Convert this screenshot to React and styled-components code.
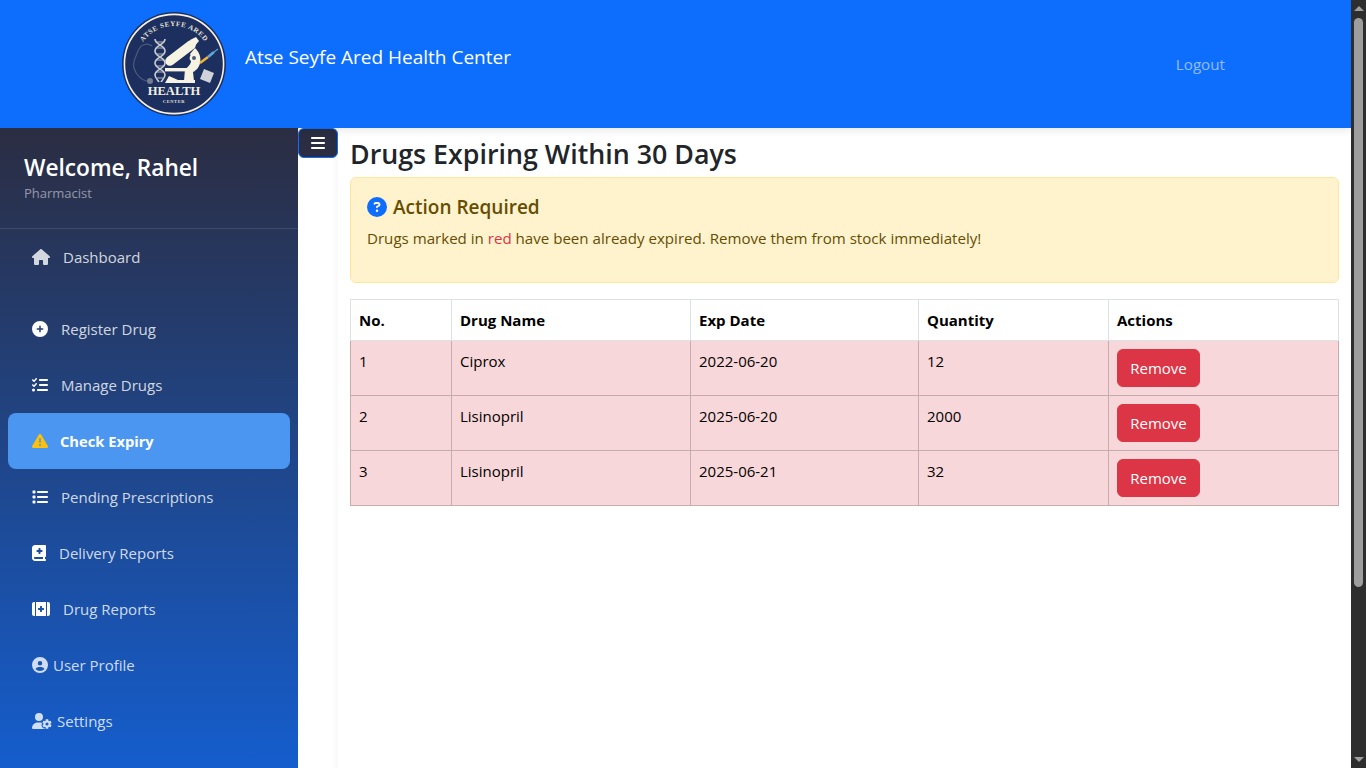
import styled, { createGlobalStyle } from "styled-components";
import {
  FaHouse,
  FaCirclePlus,
  FaListCheck,
  FaTriangleExclamation,
  FaList,
  FaBookMedical,
  FaKitMedical,
  FaCircleUser,
  FaUserGear,
  FaCircleQuestion,
  FaBars,
} from "react-icons/fa6";

const navItems = [
  { label: "Dashboard", icon: FaHouse, iconWidth: 18, first: true, soft: true },
  { label: "Register Drug", icon: FaCirclePlus, iconWidth: 16 },
  { label: "Manage Drugs", icon: FaListCheck, iconWidth: 16 },
  { label: "Check Expiry", icon: FaTriangleExclamation, iconWidth: 16, active: true },
  { label: "Pending Prescriptions", icon: FaList, iconWidth: 16 },
  { label: "Delivery Reports", icon: FaBookMedical, iconWidth: 14 },
  { label: "Drug Reports", icon: FaKitMedical, iconWidth: 18 },
  { label: "User Profile", icon: FaCircleUser, iconWidth: 16, tight: true, soft: true },
  { label: "Settings", icon: FaUserGear, iconWidth: 20, tight: true, soft: true },
];

const drugs = [
  { no: 1, name: "Ciprox", date: "2022-06-20", qty: 12 },
  { no: 2, name: "Lisinopril", date: "2025-06-20", qty: 2000 },
  { no: 3, name: "Lisinopril", date: "2025-06-21", qty: 32 },
];

function Logo() {
  return (
    <LogoSvg viewBox="0 0 106 104" role="img" aria-label="Atse Seyfe Ared Health Center">
      <defs>
        <path id="logoArc" d="M 14 52 A 38 38 0 0 1 90 52" />
      </defs>
      <circle cx="52" cy="52" r="52" fill="#1c2f5e" />
      <circle cx="52" cy="52" r="49.6" fill="none" stroke="#f6f1e2" strokeWidth="1.6" />
      <text fontFamily="Liberation Serif, serif" fontWeight="700" fontSize="7" letterSpacing="0.6" fill="#e4e1d4">
        <textPath href="#logoArc" startOffset="50%" textAnchor="middle">
          ATSE SEYFE ARED
        </textPath>
      </text>
      {/* stethoscope */}
      <path
        d="M30 34 C25 30 18 33 16 39 C14 45 10 50 12 56 C14 63 20 69 26 69"
        fill="none"
        stroke="#4c5b7c"
        strokeWidth="1.2"
      />
      <circle cx="28" cy="69" r="3" fill="#717c92" />
      {/* dna */}
      <path
        d="M33 27 C33 33 43 33 43 39 C43 45 33 45 33 51 C33 57 43 57 43 63 C43 66 40 68 39 70 M43 27 C43 33 33 33 33 39 C33 45 43 45 43 51 C43 57 33 57 33 63 C33 66 36 68 37 70"
        fill="none"
        stroke="#c9ccd0"
        strokeWidth="1.6"
      />
      <path d="M35 30H41M35 36H41M35 42H41M35 48H41M35 54H41M35 60H41M35 66H41" stroke="#aeb3ba" strokeWidth="1" />
      {/* microscope */}
      <path d="M48 49 L69 33" stroke="#f7f3e3" strokeWidth="9.5" strokeLinecap="round" />
      <path d="M68 28 L74 25 L77 29 L72 35Z" fill="#f7f3e3" />
      <path d="M73 36 C81 43 80 56 71 60 L72 69 L62 69 L63 57 C69 54 71 47 68 42Z" fill="#f7f3e3" />
      <rect x="43" y="56" width="23" height="3.4" fill="#f7f3e3" />
      <path d="M43 71 L47 64 L56 68 L73 68 L73 71Z" fill="#f7f3e3" />
      <circle cx="72" cy="46" r="4.4" fill="#f7f3e3" />
      <circle cx="72" cy="46" r="2" fill="#4c5b7c" />
      {/* syringe */}
      <path d="M78 51 L86 45" stroke="#f2b632" strokeWidth="2.4" />
      <path d="M86 45 L92 40" stroke="#5fa5d6" strokeWidth="2.8" />
      <path d="M92 40 L96 37" stroke="#5fa5d6" strokeWidth="1.1" />
      {/* pill pack */}
      <path d="M82 57 L92 61 L88 71 L78 67Z" fill="#cfd3d8" />
      <text
        x="52"
        y="83"
        textAnchor="middle"
        fontFamily="Liberation Serif, serif"
        fontWeight="700"
        fontSize="12.6"
        fill="#f3efe0"
      >
        HEALTH
      </text>
      <text
        x="52"
        y="91"
        textAnchor="middle"
        fontFamily="Liberation Serif, serif"
        fontWeight="700"
        fontSize="4.5"
        letterSpacing="0.6"
        fill="#e6e3d6"
      >
        CENTER
      </text>
    </LogoSvg>
  );
}

export default function App() {
  return (
    <>
      <GlobalStyle />
      <Viewport>
        <Page>
          <Header>
            <Logo />
            <Brand>Atse Seyfe Ared Health Center</Brand>
            <LogoutLink href="#">Logout</LogoutLink>
          </Header>
          <Shell>
            <Sidebar>
              <Profile>
                <Welcome>Welcome, Rahel</Welcome>
                <Role>Pharmacist</Role>
              </Profile>
              <NavList>
                {navItems.map((item) => (
                  <NavItem
                    key={item.label}
                    href="#"
                    $active={item.active}
                    $first={item.first}
                    $tight={item.tight}
                    $soft={item.soft}
                    $iconWidth={item.iconWidth}
                  >
                    <item.icon />
                    {item.label}
                  </NavItem>
                ))}
              </NavList>
            </Sidebar>
            <ToggleColumn>
              <ToggleButton aria-label="Toggle sidebar">
                <FaBars />
              </ToggleButton>
            </ToggleColumn>
            <Content>
              <PageTitle>Drugs Expiring Within 30 Days</PageTitle>
              <Alert>
                <AlertTitle>
                  <FaCircleQuestion />
                  Action Required
                </AlertTitle>
                <AlertText>
                  Drugs marked in <RedWord>red</RedWord> have been already expired. Remove them from stock immediately!
                </AlertText>
              </Alert>
              <DrugTable>
                <colgroup>
                  <col width="101" />
                  <col width="239" />
                  <col width="228" />
                  <col width="190" />
                  <col width="230" />
                </colgroup>
                <thead>
                  <tr>
                    <th>No.</th>
                    <th>Drug Name</th>
                    <th>Exp Date</th>
                    <th>Quantity</th>
                    <th>Actions</th>
                  </tr>
                </thead>
                <tbody>
                  {drugs.map((drug) => (
                    <tr key={drug.no}>
                      <td>{drug.no}</td>
                      <td>{drug.name}</td>
                      <td>{drug.date}</td>
                      <td>{drug.qty}</td>
                      <td>
                        <RemoveButton>Remove</RemoveButton>
                      </td>
                    </tr>
                  ))}
                </tbody>
              </DrugTable>
            </Content>
          </Shell>
        </Page>
        <ScrollTrack aria-hidden="true">
          <ScrollArrow />
          <ScrollThumb />
          <ScrollArrow $down />
        </ScrollTrack>
      </Viewport>
    </>
  );
}

const GlobalStyle = createGlobalStyle`
  * {
    box-sizing: border-box;
  }
  body {
    margin: 0;
    background: #fff;
    color: #212529;
    font-family: "Open Sans", "Noto Sans", sans-serif;
    font-size: 15px;
    line-height: 24px;
  }
`;

const Viewport = styled.div`
  height: 100vh;
  display: flex;
  overflow: hidden;
`;

const Page = styled.div`
  flex: 1;
  min-width: 0;
  overflow-y: auto;
  scrollbar-width: none;
`;

const ScrollTrack = styled.div`
  width: 15px;
  flex: none;
  display: flex;
  flex-direction: column;
  align-items: center;
  background: #2e2e2e;
  padding: 6px 0;
`;

const ScrollArrow = styled.div`
  width: 0;
  height: 0;
  border-left: 5px solid transparent;
  border-right: 5px solid transparent;
  ${(p) => (p.$down ? "border-top: 5px solid #9e9e9e; margin-top: auto;" : "border-bottom: 5px solid #9e9e9e;")}
`;

const ScrollThumb = styled.div`
  width: 9px;
  height: 569px;
  margin-top: 7px;
  border-radius: 5px;
  background: #9e9e9e;
`;

const Header = styled.header`
  height: 128px;
  background: #0d6efd;
  display: flex;
  align-items: flex-start;
  position: relative;
  box-shadow: 0 2px 8px rgba(0, 0, 0, 0.1);
  padding: 12px 126px 0 122px;
`;

const LogoSvg = styled.svg`
  width: 106px;
  height: 104px;
  flex: none;
`;

const Brand = styled.span`
  margin: 32px 0 0 17px;
  color: #fff;
  font-size: 19px;
  line-height: 27px;
`;

const LogoutLink = styled.a`
  margin: 40px 0 0 auto;
  color: rgba(255, 255, 255, 0.55);
  font-size: 15.2px;
  text-decoration: none;
`;

const Shell = styled.div`
  display: flex;
  min-height: 862px;
`;

const Sidebar = styled.aside`
  width: 298px;
  flex: none;
  position: relative;
  background: linear-gradient(180deg, #2b2d42 0%, #0d6efd 100%);
`;

const Profile = styled.div`
  height: 101px;
  padding: 25px 24px 0;
  border-bottom: 1px solid rgba(255, 255, 255, 0.1);
`;

const Welcome = styled.h4`
  margin: 0;
  color: #fff;
  font-size: 22.7px;
  font-weight: 600;
  line-height: 30px;
`;

const Role = styled.small`
  display: block;
  color: rgba(255, 255, 255, 0.5);
  font-size: 13px;
  line-height: 21px;
`;

const NavList = styled.nav`
  display: flex;
  flex-direction: column;
  padding: 0 8px;
`;

const NavItem = styled.a`
  height: 56px;
  display: flex;
  align-items: center;
  padding-left: 24px;
  margin-bottom: ${(p) => (p.$first ? "16px" : "0")};
  border-radius: 8px;
  background: ${(p) => (p.$active ? "#4a96f1" : "transparent")};
  color: ${(p) => (p.$active ? "#fff" : "rgba(255, 255, 255, 0.8)")};
  font-size: ${(p) => (p.$active ? "14.7px" : "15px")};
  font-weight: ${(p) => (p.$active ? 700 : 400)};
  text-decoration: none;
  svg {
    height: 16px;
    width: ${(p) => p.$iconWidth}px;
    flex: none;
    margin-right: ${(p) => (p.$tight ? "5px" : p.$active ? "12px" : "13px")};
    color: ${(p) => (p.$active ? "#ffc107" : p.$soft ? "inherit" : "#fff")};
  }
`;

const ToggleColumn = styled.div`
  width: 40px;
  flex: none;
`;

const ToggleButton = styled.button`
  width: 40px;
  height: 30px;
  display: flex;
  align-items: center;
  justify-content: center;
  padding: 0;
  border: 1px solid #0d6efd;
  border-radius: 6px;
  background: #2b2d42;
  color: #fff;
  svg {
    font-size: 16px;
  }
`;

const Content = styled.main`
  flex: 1;
  min-width: 0;
  padding: 9px 12px 0;
  box-shadow: 0 0 10px rgba(0, 0, 0, 0.05);
`;

const PageTitle = styled.h3`
  margin: 0 0 7px;
  font-size: 26.8px;
  font-weight: 600;
  line-height: 33px;
`;

const Alert = styled.div`
  padding: 16px;
  margin-bottom: 16px;
  background: #fff3cd;
  border: 1px solid #ffe69c;
  border-radius: 6px;
  color: #664d03;
`;

const AlertTitle = styled.h5`
  display: flex;
  align-items: center;
  margin: 0 0 6px;
  font-size: 19px;
  font-weight: 600;
  line-height: 26px;
  svg {
    font-size: 20px;
    margin-right: 6px;
    color: #0d6efd;
  }
`;

const AlertText = styled.p`
  margin: 0 0 16px;
  font-size: 15.1px;
`;

const RedWord = styled.span`
  color: #dc3545;
`;

const DrugTable = styled.table`
  width: 989px;
  table-layout: fixed;
  border-collapse: collapse;
  color: #000;
  th,
  td {
    padding: 8px;
    text-align: left;
    vertical-align: top;
  }
  th {
    background: #fff;
    border: 1px solid #dee2e6;
    font-weight: 700;
  }
  td {
    background: #f8d7da;
    border: 1px solid #c6acae;
  }
`;

const RemoveButton = styled.button`
  display: block;
  height: 38px;
  width: 83px;
  padding: 0;
  border: 1px solid #dc3545;
  border-radius: 6px;
  background: #dc3545;
  color: #fff;
  font: inherit;
`;
